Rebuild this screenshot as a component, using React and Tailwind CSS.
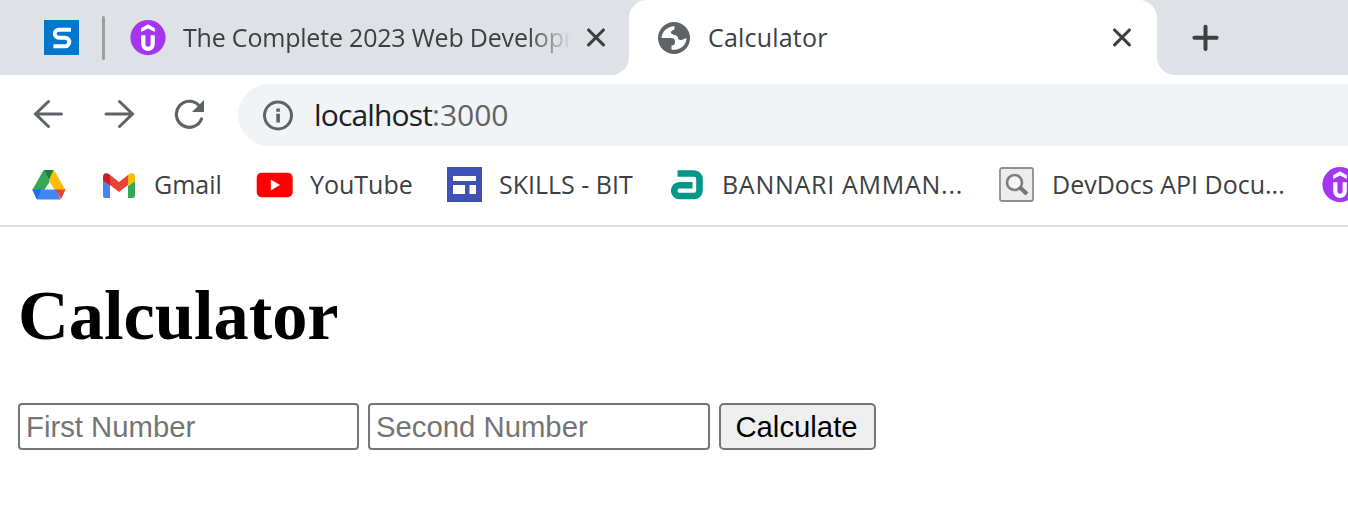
import React from "react";

function Udemy() {
  return (
    <svg width="36" height="36" viewBox="0 0 36 36" className="shrink-0">
      <circle cx="18" cy="17.6" r="17.6" fill="#a435f0" />
      <path d="M11.2 12.100V8.200L18 4.300l6.800 3.900v3.900L18 8.400z" fill="#fff" />
      <path d="M13.300 15.200V24C13.300 30.400 22.700 30.400 22.700 24V15.200" fill="none" stroke="#fff" strokeWidth="4.200" />
    </svg>
  );
}

function Close() {
  return (
    <svg width="20" height="20" viewBox="0 0 20 20" className="shrink-0" stroke="#3c4043" strokeWidth="3.1" strokeLinecap="round">
      <path d="M2.6 2l14.800 14.800M17.400 2L2.600 16.800" />
    </svg>
  );
}

function TabStrip() {
  return (
    <div className="flex h-[75px] bg-white text-[25px] text-[#3c4043]">
      <div className="flex w-[629px] shrink-0 items-center rounded-br-[18px] bg-[#dee1e6] pl-[44px]">
        <svg width="35" height="35" viewBox="0 0 35 35" className="shrink-0">
          <path d="M0 0h35v35H0z" fill="#0077cc" />
          <path d="M27 9.7H14.8a4 4 0 0 0 0 8H21a4.2 4.2 0 0 1 0 8.600H9.400" fill="none" stroke="#fff" strokeWidth="4" />
        </svg>
        <div className="ml-[23px] h-11 w-[3px] shrink-0 rounded-full bg-[#9b9da1]" />
        <div className="ml-[25px] flex">
          <Udemy />
        </div>
        <div className="ml-[17px] w-[388px] shrink-0 overflow-hidden whitespace-nowrap [mask-image:linear-gradient(to_right,black_345px,transparent_388px)]">
          <span className="tracking-[-0.2px]">The Complete 2023 Web Developm</span>
        </div>
        <div className="ml-[15px] flex">
          <Close />
        </div>
      </div>
      <div className="w-[528px] shrink-0 bg-[#dee1e6]">
        <div className="flex h-full items-center rounded-t-[18px] bg-white pl-[28px]">
          <svg width="34" height="34" viewBox="0 0 34 34" className="shrink-0">
            <circle cx="17" cy="17" r="16" fill="#5f6368" />
            <path d="M4.500 17C5 10.500 10 5.500 17.500 5.200V7.500C17.500 9.500 14 9 14 11.500C14 14.500 21 13 21 17C21 18.600 22.500 19 24.500 19L29.500 17C29.500 24.500 23 29.500 14.500 28.800V24.500C17 24.500 18 23.500 18 20.500C18 18 16.500 17 14 17z" fill="#fff" />
          </svg>
          <span className="ml-[17px] w-[387px] whitespace-nowrap tracking-[0.2px]">Calculator</span>
          <div className="ml-[17px] flex">
            <Close />
          </div>
        </div>
      </div>
      <div className="flex flex-1 items-center rounded-bl-[18px] bg-[#dee1e6] pl-[34px]">
        <svg width="28" height="28" viewBox="0 0 28 28" stroke="#3c4043" strokeWidth="4" strokeLinecap="round">
          <path d="M14.500 2.700v22.200M3.400 13.800h22.200" />
        </svg>
      </div>
    </div>
  );
}

function Toolbar() {
  return (
    <div className="flex h-[80px] items-center pl-[33px]">
      <svg width="32" height="32" viewBox="0 0 32 32" className="shrink-0" fill="none" stroke="#5f6368" strokeWidth="3" strokeLinecap="round">
        <path d="M28.500 15H3M15.500 2.500L2.500 15l13 12.500" />
      </svg>
      <svg width="32" height="32" viewBox="0 0 32 32" className="ml-[38px] shrink-0" fill="none" stroke="#5f6368" strokeWidth="3" strokeLinecap="round">
        <path d="M3 15h26M16.500 2.500L29.500 15l-13 12.500" />
      </svg>
      <svg width="32" height="32" viewBox="0 0 32 32" className="ml-[39px] shrink-0">
        <path d="M27.500 20A13 13 0 1 1 25 6.500" fill="none" stroke="#5f6368" strokeWidth="3.200" strokeLinecap="round" />
        <path d="M30 1v12H18z" fill="#5f6368" />
      </svg>
      <div className="ml-[32px] flex h-[62px] flex-1 items-center rounded-l-full bg-[#f1f3f4] pl-[24px]">
        <svg width="32" height="32" viewBox="0 0 32 32" className="shrink-0">
          <circle cx="16" cy="16.500" r="13.500" fill="none" stroke="#5f6368" strokeWidth="3" />
          <path d="M14.300 9.500h3.600v3.200h-3.600zM14.300 14.800h3.600v8.700h-3.600z" fill="#5f6368" />
        </svg>
        <span className="ml-[20px] whitespace-nowrap pb-[2px] text-[30px] text-[#202124]">
          <span className="tracking-[-0.850px]">localhost</span>
          <span className="text-[#5f6368]">:3000</span>
        </span>
      </div>
    </div>
  );
}

function Bookmarks() {
  return (
    <div className="flex h-[72px] items-center overflow-hidden whitespace-nowrap border-b-2 border-[#dcdcdc] pb-[11px] pl-[32px] text-[25px] text-[#3c4043]">
      <svg width="34" height="30" viewBox="0 0 34 30" className="shrink-0">
        <path d="M12.500 0H17.500V12L12.200 20H.3L11 1z" fill="#34a853" />
        <path d="M21 0L22.500 1 33.500 20H22.700L17 10.500z" fill="#fbbc04" />
        <path d="M12.500 0H21.500L17.200 9.500z" fill="#188038" />
        <path d="M.3 19.500H24.500L28.500 29.600H5.500L4.500 28.800z" fill="#4285f4" />
        <path d="M.3 19.500H9.500L5 29.300z" fill="#1a73e8" />
        <path d="M23.500 19.500h10L29 29.200z" fill="#ea4335" />
      </svg>
      <svg width="34" height="26" viewBox="0 0 34 26" className="ml-[36px] shrink-0">
        <path d="M1 9l7 5v12H3.200A2.200 2.200 0 0 1 1 23.800z" fill="#4285f4" />
        <path d="M33 9l-7 5v12h4.800a2.200 2.200 0 0 0 2.200-2.200z" fill="#34a853" />
        <path d="M8 3l9 7 9-7v10l-9 7-9-7z" fill="#ea4335" />
        <path d="M1 9V4.500C1 1 5 0 8 3v11z" fill="#c5221f" />
        <path d="M33 9V4.500C33 1 29 0 26 3v11z" fill="#fbbc04" />
      </svg>
      <span className="ml-[18px] w-[84px] shrink-0">Gmail</span>
      <svg width="37" height="26" viewBox="0 0 37 26" className="ml-[18px] shrink-0">
        <rect x=".7" y=".8" width="36" height="24.500" rx="5" fill="#f00" />
        <path d="M14.800 7.500v11l9.200-5.500z" fill="#fff" />
      </svg>
      <span className="ml-[17px] w-[120px] shrink-0">YouTube</span>
      <svg width="35" height="35" viewBox="0 0 35 35" className="ml-[17px] shrink-0">
        <path d="M0 0h35v35H0z" fill="#3f51b5" />
        <path d="M6 9h23v5H6zM6 18h12v9H6zM22.500 18H29v9h-6.500z" fill="#fff" />
      </svg>
      <span className="ml-[17px] w-[152px] shrink-0">SKILLS - BIT</span>
      <svg width="34" height="32" viewBox="0 0 34 32" className="ml-[19px] shrink-0">
        <path d="M7.500 4.500H24a5.500 5.500 0 0 1 5.500 5.500V21.500a5.500 5.500 0 0 1-5.500 5.500H9.500a5.300 5.300 0 0 1-5.300-5.300v-.200a5.500 5.500 0 0 1 5.300-5.200H22.500" fill="none" stroke="#009688" strokeWidth="6.600" />
      </svg>
      <span className="ml-[18px] w-[260px] shrink-0 tracking-[0.720px]">BANNARI AMMAN...</span>
      <svg width="35" height="35" viewBox="0 0 35 35" className="ml-[17px] shrink-0">
        <rect x="1" y="1" width="33" height="33" rx="2" fill="#ededed" stroke="#8f8f8f" strokeWidth="1.800" />
        <circle cx="15.500" cy="15.500" r="7.500" fill="#f5f5f5" stroke="#808080" strokeWidth="2.700" />
        <path d="M21 20.500l7 6.500" stroke="#757575" strokeWidth="4.200" />
      </svg>
      <span className="ml-[18px] w-[252px] shrink-0">DevDocs API Docu...</span>
      <div className="ml-[18px] flex">
        <Udemy />
      </div>
    </div>
  );
}

export default function App() {
  return (
    <div className="h-[518px] w-[1348px] overflow-hidden bg-white font-['Open_Sans',sans-serif]">
      <TabStrip />
      <Toolbar />
      <Bookmarks />
      <main className="pl-[18px] pt-[48px]">
        <h1 className="font-['Liberation_Serif',serif] text-[70.4px] font-bold leading-[80px] text-black">Calculator</h1>
        <form className="mt-[48px] flex font-['Liberation_Sans',sans-serif] text-[29.3px] leading-none">
          <input placeholder="First Number" className="h-[47px] w-[341px] rounded-[4px] border-2 border-[#767676] px-[6px] placeholder:text-[#757575]" />
          <input placeholder="Second Number" className="ml-[9px] h-[47px] w-[342px] rounded-[4px] border-2 border-[#767676] px-[6px] placeholder:text-[#757575]" />
          <button type="button" className="ml-[9px] h-[47px] w-[157px] rounded-[5px] border-2 border-[#767676] bg-[#efefef] pr-[2px] text-black">
            Calculate
          </button>
        </form>
      </main>
    </div>
  );
}
